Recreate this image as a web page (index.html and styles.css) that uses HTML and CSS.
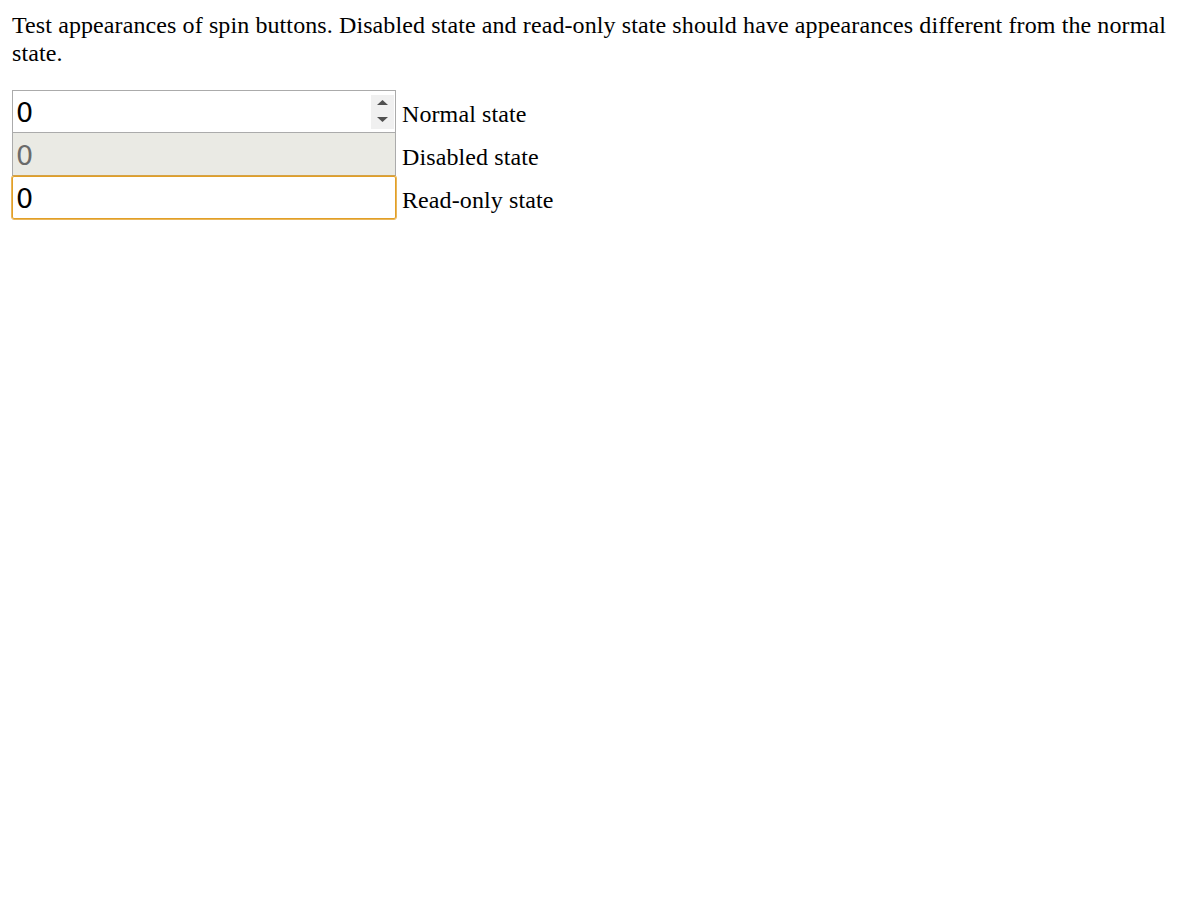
FILE: index.html
```html
<!DOCTYPE html>
<html>
<head>
<meta charset="utf-8">
<link rel="stylesheet" href="styles.css">
</head>
<body>
<p class="intro">Test appearances of spin buttons. Disabled state and read-only state should have appearances different from the normal state.</p>
<div class="rows">
  <div class="row">
    <div class="field normal"><span class="val">0</span>
      <span class="spin">
        <svg width="23" height="34" viewBox="0 0 23 34"><path d="M6 10 L11.5 5 L17 10 Z" fill="#505050"/><path d="M6 22 L17 22 L11.5 27 Z" fill="#505050"/></svg>
      </span>
    </div>
    <span class="label">Normal state</span>
  </div>
  <div class="row">
    <div class="field disabled"><span class="val">0</span></div>
    <span class="label">Disabled state</span>
  </div>
  <div class="row">
    <div class="field readonly"><span class="val">0</span></div>
    <span class="label">Read-only state</span>
  </div>
</div>
</body>
</html>
```
FILE: styles.css
```css
html, body {
  margin: 0;
  background: #fff;
}
body {
  padding: 12px;
  font-family: "Liberation Serif", "Times New Roman", serif;
  font-size: 24px;
  letter-spacing: 0.1px;
  color: #000;
}
.intro {
  margin: 0 0 23px 0;
  line-height: 27.6px;
}
.rows {
  display: flex;
  flex-direction: column;
}
.row {
  display: flex;
  align-items: baseline;
}
.field {
  position: relative;
  box-sizing: border-box;
  width: 384px;
  height: 43px;
  border: 1px solid #ababab;
  padding: 2px 0 0 3px;
  font-family: "DejaVu Sans", sans-serif;
  font-size: 27px;
  letter-spacing: 0;
  line-height: 40px;
  background: #fff;
}
.val {
  display: inline-block;
}
.disabled {
  background: #eaeae4;
  color: #6a6a6a;
  border-top: 0;
  padding-top: 3px;
}
.readonly {
  border-color: #e29f26;
  border-radius: 2px;
  outline: 1px solid rgba(226, 159, 38, 0.75);
  outline-offset: 0;
}
.spin {
  position: absolute;
  right: 1px;
  top: 4px;
  width: 23px;
  height: 34px;
  background: #f0f0f0;
  display: block;
  line-height: 0;
}
.label {
  margin-left: 6px;
  line-height: 27.6px;
}
```
